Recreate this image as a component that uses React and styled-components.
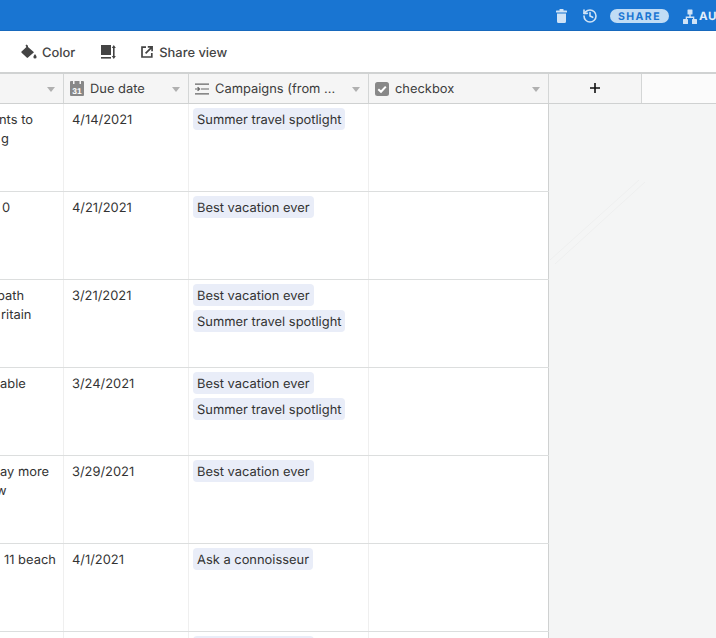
import React from "react";
import styled, { createGlobalStyle } from "styled-components";
import { History } from "lucide-react";

const Global = createGlobalStyle`
  html, body { margin: 0; padding: 0; background: #fff; }
  body {
    font-family: Inter, "Liberation Sans", sans-serif;
    color: #333;
    overflow: hidden;
    text-rendering: geometricPrecision;
  }
`;

const Page = styled.div`
  width: 716px;
  height: 638px;
  overflow: hidden;
  display: flex;
  flex-direction: column;
`;

const TopBar = styled.header`
  height: 31px;
  flex: none;
  background: #1975d2;
  display: flex;
  align-items: center;
  padding: 2px 0 0 556px;
  box-sizing: border-box;
  color: #d0e3f6;
  border-bottom: 1px solid #1769bd;
`;

const TopIcon = styled.span`
  display: flex;
  flex: none;
  margin-right: ${(p) => p.$gap}px;
`;

const SharePill = styled.span`
  width: 59px;
  flex: none;
  height: 14px;
  border-radius: 7px;
  background: #c0dcf5;
  color: #1975d2;
  font-size: 10.5px;
  font-weight: 700;
  letter-spacing: 1.4px;
  display: flex;
  align-items: center;
  justify-content: center;
  margin-right: 14px;
`;

const TopLabel = styled.span`
  flex: none;
  font-size: 11.5px;
  font-weight: 700;
  letter-spacing: 0.6px;
  margin-left: 2px;
  color: #e4effa;
`;

const Toolbar = styled.div`
  height: 41px;
  flex: none;
  display: flex;
  align-items: center;
  gap: 25.5px;
  padding-left: 21px;
  background: #fff;
`;

const ToolItem = styled.span`
  display: flex;
  align-items: center;
  gap: ${(p) => p.$gap}px;
`;

const ToolLabel = styled.span`
  padding-top: 4px;
  font-size: 12.9px;
  font-weight: 500;
  color: #444;
`;

const HeaderRow = styled.div`
  height: 32px;
  flex: none;
  display: flex;
  box-sizing: border-box;
  border-top: 2px solid #d0d2d2;
  border-bottom: 1px solid #cfd1d1;
  background: #fbfbfb;
`;

const HeadCell = styled.div`
  width: ${(p) => p.$w}px;
  flex: none;
  box-sizing: border-box;
  background: #f5f5f5;
  border-right: 1px solid #d4d6d6;
  display: flex;
  align-items: center;
  gap: 6px;
  padding: 0 8px 0 6px;
  font-size: 12.9px;
  color: #3d3d3d;
`;

const HeadLabel = styled.span`
  flex: 1;
  padding-top: 2px;
  white-space: nowrap;
  overflow: hidden;
`;

const Caret = styled.i`
  width: 0;
  height: 0;
  border-left: 4px solid transparent;
  border-right: 4px solid transparent;
  border-top: 5px solid #b0b0b0;
  margin-top: 2px;
`;

const AddCell = styled(HeadCell)`
  justify-content: center;
  padding: 0 0 1px;
`;

const Body = styled.div`
  flex: 1;
  display: flex;
  min-height: 0;
`;

const Rows = styled.div`
  width: 549px;
  flex: none;
`;

const Row = styled.div`
  height: 88px;
  display: flex;
  box-sizing: border-box;
  border-bottom: 1px solid #dcdede;
  background: #fff;
`;

const Cell = styled.div`
  width: ${(p) => p.$w}px;
  flex: none;
  box-sizing: border-box;
  overflow: hidden;
  border-right: 1px solid ${(p) => (p.$last ? "#cfd1d1" : "#efefef")};
  font-size: 12.9px;
  line-height: 19px;
  color: #333;
`;

const TextCell = styled(Cell)`
  padding: 7px 8px;
`;

const ClippedCell = styled(Cell)`
  padding-top: 7px;
`;

const ClippedLine = styled.div`
  margin-left: ${(p) => p.$x}px;
  white-space: nowrap;
`;

const PillCell = styled(Cell)`
  padding: 4px;
  display: flex;
  flex-direction: column;
  align-items: flex-start;
  gap: 4px;
`;

const Pill = styled.span`
  box-sizing: border-box;
  height: 22px;
  line-height: 19px;
  padding: 3px 4px 0;
  border-radius: 4px;
  background: #e9edf8;
  color: #333;
  white-space: nowrap;
`;

const Panel = styled.div`
  flex: 1;
  position: relative;
  background: #f4f5f5;
  overflow: hidden;
`;

const PanelStreak = styled.svg`
  position: absolute;
  left: 0;
  top: 0;
`;

const columns = [64, 125, 180, 180];

const rows = [
  { left: [["nts to", -1], ["g", 1]], date: "4/14/2021", tags: ["Summer travel spotlight"] },
  { left: [["0", 2]], date: "4/21/2021", tags: ["Best vacation ever"] },
  { left: [["bath", -3], ["ritain", 1]], date: "3/21/2021", tags: ["Best vacation ever", "Summer travel spotlight"] },
  { left: [["able", 0]], date: "3/24/2021", tags: ["Best vacation ever", "Summer travel spotlight"] },
  { left: [["ay more", 0], ["w", -4]], date: "3/29/2021", tags: ["Best vacation ever"] },
  { left: [["11 beach", 4]], date: "4/1/2021", tags: ["Ask a connoisseur"] },
  { left: [], date: "", tags: ["Best vacation ever"] },
];

const Trash = () => (
  <svg width="11" height="14" viewBox="0 0 11 14" fill="currentColor">
    <rect x="3.5" y="0" width="4" height="2" rx="0.5" />
    <rect x="0" y="1.5" width="11" height="2" rx="0.6" />
    <path d="M1 4.5h9v8a1.5 1.5 0 0 1-1.5 1.5h-6A1.5 1.5 0 0 1 1 12.5z" />
  </svg>
);

const Org = () => (
  <TopIcon $gap={0}>
    <svg width="14" height="15" viewBox="0 0 14 15" fill="currentColor">
      <rect x="4.5" y="0.5" width="5" height="5" rx="0.6" />
      <rect x="0" y="10" width="5" height="5" rx="0.6" />
      <rect x="9" y="10" width="5" height="5" rx="0.6" />
      <path d="M6.3 5h1.4v2.6h3.6V10H10V8.9H4V10H2.7V7.6h3.6z" />
    </svg>
  </TopIcon>
);

const Bucket = () => (
  <svg width="16" height="15" viewBox="0 0 16 15" fill="#444">
    <path d="M5.5 0.5 7 1.8 L7 3 L13 8.2 L7 13.6 a1 1 0 0 1-1.3 0 L0.6 8.8 a1 1 0 0 1 0-1.4 L5.4 3 L4.5 1.6z" />
    <path d="M14 10c1 1.4 1.6 2.2 1.6 3a1.6 1.6 0 0 1-3.2 0c0-.8.6-1.6 1.6-3z" />
  </svg>
);

const RowHeight = () => (
  <svg width="15" height="14" viewBox="0 0 15 14" fill="#444">
    <rect x="0" y="0" width="10" height="10" />
    <rect x="0" y="12" width="10" height="1.6" />
    <rect x="12" y="3" width="1.6" height="8" />
    <path d="M12.8 0l2 3h-4zM12.8 14l-2-3h4z" />
  </svg>
);

const ShareOut = () => (
  <svg width="12" height="12" viewBox="0 0 12 12" fill="none" stroke="#444" strokeWidth="1.7">
    <path d="M5 1.2H1v9.8h9.8V7" />
    <path d="M4.6 7.4 10.4 1.6M6.8 0.9h4.3v4.3" />
  </svg>
);

const Calendar = () => (
  <svg width="14" height="15" viewBox="0 0 14 15">
    <rect x="0" y="0" width="14" height="15" rx="1" fill="#888" />
    <rect x="3" y="0" width="1.5" height="3" fill="#f5f5f5" />
    <rect x="9.5" y="0" width="1.5" height="3" fill="#f5f5f5" />
    <text x="7" y="12.6" textAnchor="middle" fontSize="8.5" fontWeight="700" fill="#fff" fontFamily="Liberation Sans, sans-serif">31</text>
  </svg>
);

const Lookup = () => (
  <svg width="14" height="12" viewBox="0 0 14 12" fill="none" stroke="#666" strokeWidth="1.2">
    <path d="M0 1.2h14M6 6h8M0 10.8h14M0 6h4M2.6 4.2 4.6 6 2.6 7.8" />
  </svg>
);

const Check = () => (
  <svg width="14" height="14" viewBox="0 0 14 14">
    <rect width="14" height="14" rx="2.5" fill="#888" />
    <path d="M3.3 7.2 6 9.8l4.8-5.2" fill="none" stroke="#fff" strokeWidth="2" />
  </svg>
);

const Plus = () => (
  <svg width="10" height="10" viewBox="0 0 10 10" stroke="#111" strokeWidth="1.6">
    <path d="M5 0v10M0 5h10" />
  </svg>
);

export default function App() {
  return (
    <Page>
      <Global />
      <TopBar>
        <TopIcon $gap={15}><Trash /></TopIcon>
        <TopIcon $gap={12}><History size={16} strokeWidth={2.4} /></TopIcon>
        <SharePill>SHARE</SharePill>
        <Org />
        <TopLabel>AU</TopLabel>
      </TopBar>
      <Toolbar>
        <ToolItem $gap={5}><Bucket /><ToolLabel>Color</ToolLabel></ToolItem>
        <ToolItem $gap={0}><RowHeight /></ToolItem>
        <ToolItem $gap={6}><ShareOut /><ToolLabel>Share view</ToolLabel></ToolItem>
      </Toolbar>
      <HeaderRow>
        <HeadCell $w={columns[0]}><HeadLabel /><Caret /></HeadCell>
        <HeadCell $w={columns[1]}><Calendar /><HeadLabel>Due date</HeadLabel><Caret /></HeadCell>
        <HeadCell $w={columns[2]}><Lookup /><HeadLabel>Campaigns (from ...</HeadLabel><Caret /></HeadCell>
        <HeadCell $w={columns[3]}><Check /><HeadLabel>checkbox</HeadLabel><Caret /></HeadCell>
        <AddCell $w={93}><Plus /></AddCell>
      </HeaderRow>
      <Body>
        <Rows>
          {rows.map((r, i) => (
            <Row key={i}>
              <ClippedCell $w={columns[0]}>
                {r.left.map(([t, x]) => (
                  <ClippedLine key={t} $x={x}>{t}</ClippedLine>
                ))}
              </ClippedCell>
              <TextCell $w={columns[1]}>{r.date}</TextCell>
              <PillCell $w={columns[2]}>
                {r.tags.map((t) => <Pill key={t}>{t}</Pill>)}
              </PillCell>
              <Cell $w={columns[3]} $last />
            </Row>
          ))}
        </Rows>
        <Panel>
          <PanelStreak width="167" height="534" viewBox="0 0 167 534" fill="none" stroke="#eeefef">
            <path d="M1 156 90 76M6 160 96 78" />
          </PanelStreak>
        </Panel>
      </Body>
    </Page>
  );
}
